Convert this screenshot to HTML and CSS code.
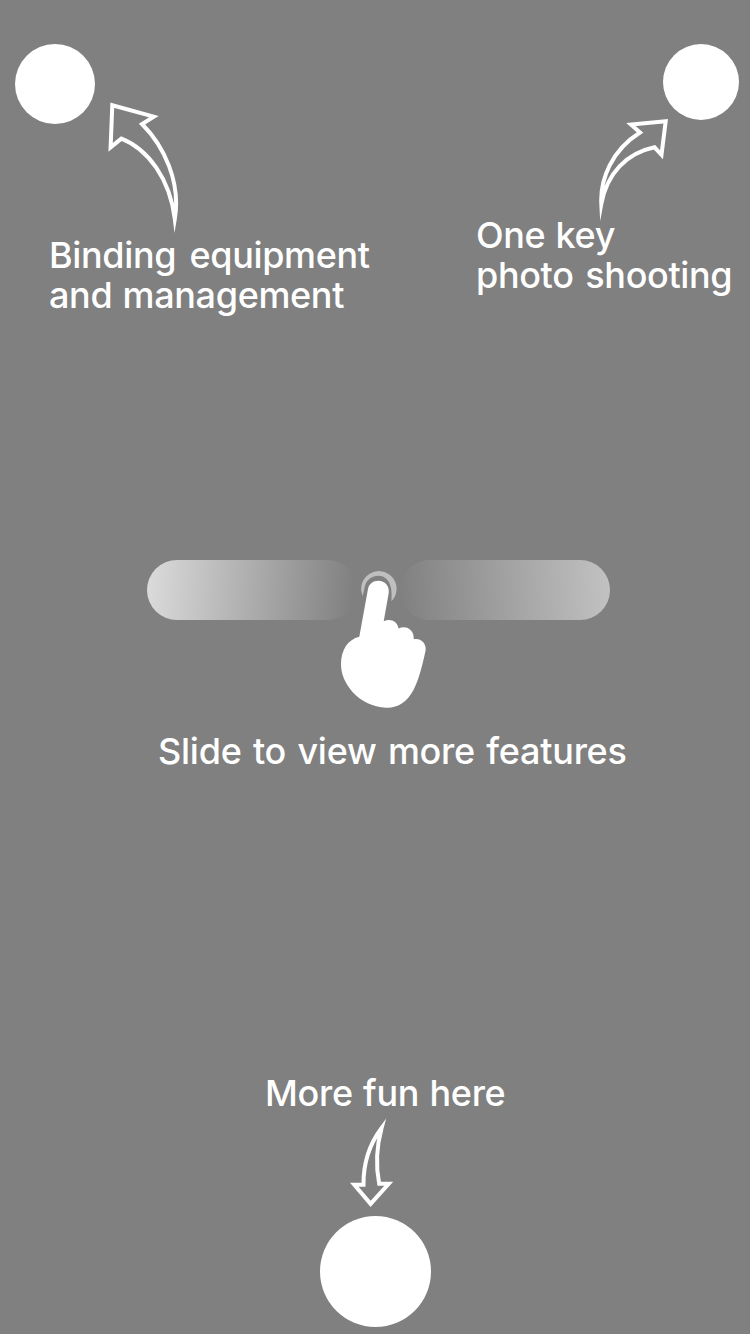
FILE: index.html
```html
<!DOCTYPE html>
<html lang="en">
<head>
<meta charset="utf-8">
<title>Quick guide</title>
<link rel="stylesheet" href="styles.css">
</head>
<body>
<main class="guide">
  <header class="top">
    <section class="tip tip-binding">
      <div class="pointer">
        <span class="spot"></span>
        <svg class="arrow" width="76" height="138" viewBox="105 98 76 138"><path d="M112.300 105.200 153.800 116.600 142 124C164 146 181 182 174.800 219C170 179 148 149 121.400 138.600L110.600 147.400Z"/></svg>
      </div>
      <p class="label"><span class="line l1">Binding equipment</span><span class="line l2">and management</span></p>
    </section>
    <section class="tip tip-photo">
      <div class="pointer">
        <svg class="arrow" width="75" height="108" viewBox="595 113 75 108"><path d="M665.700 121.300 631 124.500 640 132.500C612 150 600 179 601.300 204C607 173 627 153 654.500 147.300L661.500 154.800Z"/></svg>
        <span class="spot"></span>
      </div>
      <p class="label"><span class="line l3">One key</span><span class="line l4">photo shooting</span></p>
    </section>
  </header>

  <section class="slide">
    <div class="track">
      <span class="pill pill-left"></span>
      <span class="pill pill-right"></span>
      <svg class="hand" width="92" height="144" viewBox="338 567 92 144">
        <path class="ring" d="M362.700 596A17.700 17.700 0 1 1 391.500 601.200C391.600 597 391.700 593 391.200 589C389.800 580.500 385 575.800 378.300 575.800C371 575.800 365.500 581 364.500 588Z"/>
        <path d="M368 589C369 584 373 580.800 378.300 580.800C385 580.800 389.600 586 388.700 593L383.700 621.300C390 617.800 397.500 621 398.600 628.600C406 624.600 414.500 630 413.700 639.200C420.500 637.800 426.600 643 425.600 650.500C422 667 419 679 413.500 690C407 702 398 708 386.500 707.700C372 707 361 701 352.500 692C345 683 341 674 341 664C341 650 348 639.500 359.300 636.800Z"/>
      </svg>
    </div>
    <p class="label l5">Slide to view more features</p>
  </section>

  <footer class="more">
    <p class="label l6">More fun here</p>
    <svg class="arrow" width="46" height="94" viewBox="348 1116 46 94"><path d="M381.600 1128C368 1146 363.300 1164 363.500 1184.700H354.300L370.600 1203.900 388.700 1183.800H379.200C376 1168 376.200 1148 381.600 1128Z"/></svg>
    <span class="spot spot-large"></span>
  </footer>
</main>
</body>
</html>
```
FILE: styles.css
```css
body {
  margin: 0;
  background: #808080;
  color: #fff;
  font: 500 36px/40px Inter, "Noto Sans", sans-serif;
  letter-spacing: -.35px;
}
.guide {
  display: flex;
  flex-direction: column;
  width: 750px;
  height: 1334px;
  overflow: hidden;
}
.top {
  display: flex;
  justify-content: space-between;
  height: 560px;
}
.pointer {
  display: flex;
  align-items: flex-start;
}
.spot {
  flex: none;
  width: 80px;
  height: 80px;
  margin-top: 44px;
  border-radius: 50%;
  background: #fff;
}
.arrow {
  display: block;
  flex: none;
  fill: none;
  stroke: #fff;
  stroke-width: 4;
  stroke-miterlimit: 20;
}
.label {
  margin: 0;
  white-space: nowrap;
}
.line {
  display: block;
}
.l1 {
  word-spacing: 4px;
}
.l2,
.l3 {
  word-spacing: 1px;
}
.l4 {
  word-spacing: 2.5px;
}
.l5 {
  letter-spacing: -.25px;
  word-spacing: 2px;
}
.l6 {
  letter-spacing: -.3px;
  word-spacing: 1px;
}
.tip-binding {
  width: 380px;
}
.tip-binding .spot {
  margin-left: 15px;
}
.tip-binding .arrow {
  margin: 98px 0 0 10px;
}
.tip-binding .label {
  margin-top: -1px;
  padding-left: 49px;
}
.tip-photo {
  width: 285px;
}
.tip-photo .spot {
  width: 76px;
  height: 76px;
  margin-left: -7px;
}
.tip-photo .arrow {
  margin: 113px 0 0 130px;
}
.tip-photo .label {
  margin-top: -6px;
  padding-left: 11px;
}
.slide {
  height: 513px;
}
.track {
  position: relative;
  display: flex;
  gap: 42px;
  height: 60px;
  padding-left: 147px;
}
.pill {
  width: 211px;
  height: 60px;
  border-radius: 30px;
}
.pill-left {
  background: linear-gradient(94deg, rgba(255, 255, 255, .72), rgba(255, 255, 255, 0) 97%);
}
.pill-right {
  width: 210px;
  background: linear-gradient(86deg, rgba(255, 255, 255, 0), rgba(255, 255, 255, .52));
}
.hand {
  position: absolute;
  left: 338px;
  top: 7px;
  fill: #fff;
}
.ring {
  fill: #bfbfbf;
}
.slide .label {
  margin-top: 111px;
  padding-left: 158px;
}
.more .label {
  padding-left: 265px;
}
.more .arrow {
  margin: 3px 0 0 348px;
}
.spot-large {
  display: block;
  width: 111px;
  height: 111px;
  margin: 6px 0 0 320px;
}
```
